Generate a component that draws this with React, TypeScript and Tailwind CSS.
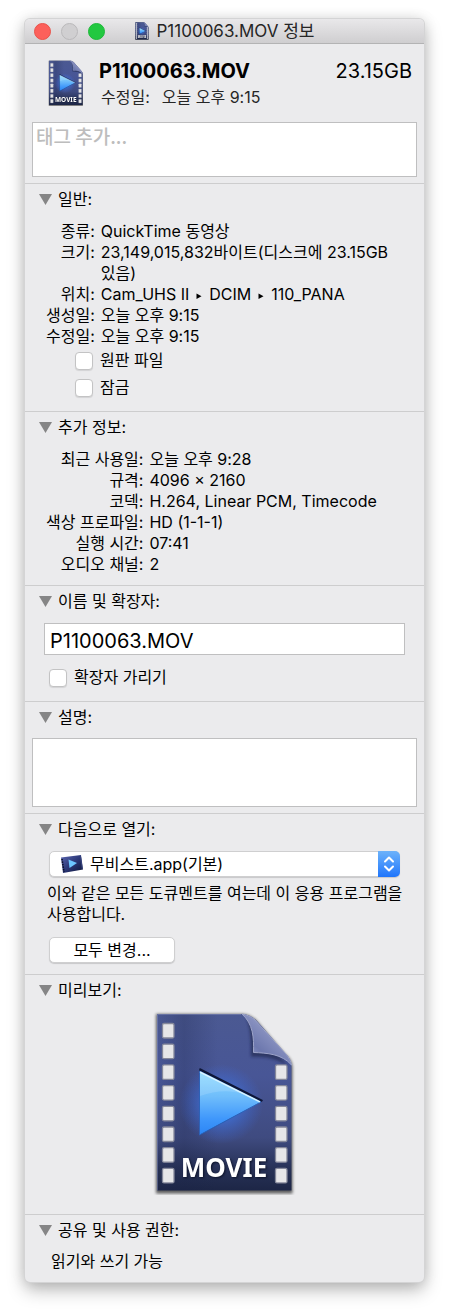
import React, { useId, useState } from 'react';

interface InfoRow {
  label: string;
  value: React.ReactNode;
}

interface SectionProps {
  title: string;
  children: React.ReactNode;
}

interface CheckRowProps {
  label: string;
  className?: string;
}

const PathArrow = () => (
  <svg className="mx-1.5 inline-block h-2 w-2" viewBox="0 0 8 8" aria-hidden="true">
    <path d="M1.500 1.500L6.500 4.200L1.500 7Z" fill="#000" />
  </svg>
);

const generalRows: InfoRow[] = [
  { label: '종류:', value: 'QuickTime 동영상' },
  { label: '크기:', value: '23,149,015,832바이트(디스크에 23.15GB 있음)' },
  {
    label: '위치:',
    value: (
      <>
        Cam_UHS II
        <PathArrow />
        DCIM
        <PathArrow />
        110_PANA
      </>
    ),
  },
  { label: '생성일:', value: '오늘 오후 9:15' },
  { label: '수정일:', value: '오늘 오후 9:15' },
];

const moreRows: InfoRow[] = [
  { label: '최근 사용일:', value: '오늘 오후 9:28' },
  { label: '규격:', value: '4096 × 2160' },
  { label: '코덱:', value: 'H.264, Linear PCM, Timecode' },
  { label: '색상 프로파일:', value: 'HD (1-1-1)' },
  { label: '실행 시간:', value: '07:41' },
  { label: '오디오 채널:', value: '2' },
];

const leftHoles = [0, 1, 2, 3, 4, 5, 6, 7];
const rightHoles = [2, 3, 4, 5, 6, 7];

/**
 * Film strip document icon, used at three sizes.
 */
const MovieIcon: React.FC<{ className: string }> = ({ className }) => {
  const id = useId();

  return (
    <svg className={className} viewBox="0 0 144 184" aria-hidden="true">
      <defs>
        <linearGradient id={`${id}body`} x1="0" y1="0" x2="0" y2="1">
          <stop offset="0" stopColor="#4b5992" />
          <stop offset="0.35" stopColor="#485696" />
          <stop offset="0.7" stopColor="#3f4b80" />
          <stop offset="0.88" stopColor="#273156" />
          <stop offset="1" stopColor="#1d2646" />
        </linearGradient>
        <linearGradient id={`${id}side`} x1="0" y1="0" x2="1" y2="0">
          <stop offset="0" stopColor="#1a2347" stopOpacity="0" />
          <stop offset="0.2" stopColor="#1a2347" stopOpacity="0.25" />
          <stop offset="0.45" stopColor="#1a2347" stopOpacity="0" />
        </linearGradient>
        <radialGradient id={`${id}glow`}>
          <stop offset="0.3" stopColor="#3d7cf0" stopOpacity="0.7" />
          <stop offset="1" stopColor="#3d6ae0" stopOpacity="0" />
        </radialGradient>
        <linearGradient id={`${id}play`} x1="0" y1="0" x2="0" y2="1">
          <stop offset="0" stopColor="#8fdcff" />
          <stop offset="0.4" stopColor="#6fbdfb" />
          <stop offset="0.75" stopColor="#3f97fb" />
          <stop offset="1" stopColor="#2b85f5" />
        </linearGradient>
        <linearGradient id={`${id}fold`} x1="0" y1="1" x2="0.6" y2="0.3">
          <stop offset="0" stopColor="#a9b0d6" />
          <stop offset="0.5" stopColor="#6d78ae" />
          <stop offset="1" stopColor="#8f97c4" />
        </linearGradient>
        <filter id={`${id}soft`} x="-20%" y="-20%" width="140%" height="140%">
          <feGaussianBlur stdDeviation="1.4" />
        </filter>
      </defs>
      <path d="M3 3H88C94 3 98 5 103 9L132 43C138 48 139.500 52 139.500 57V182.500H3Z" fill="#000" opacity="0.6" filter={`url(#${id}soft)`} />
      <path d="M4 3H88C94 3 99 5 104 10L132 42C137 47 138.500 51 138.500 56V179.500H4Z" fill={`url(#${id}body)`} />
      <path d="M4 3H88C94 3 99 5 104 10L132 42C137 47 138.500 51 138.500 56V179.500H4Z" fill={`url(#${id}side)`} />
      <path d="M4.500 179.500V3.500H88" fill="none" stroke="#8790ba" strokeOpacity="0.5" />
      <path d="M93 6C98 16 98 32 98 46C112 45 124 48 135 55Z" fill="#131b3c" opacity="0.55" filter={`url(#${id}soft)`} />
      <path d="M89 3C94 4 97 5 101 8L133 43C136 47 138 50 138.500 54C129 43 114 42 100.500 41.500C101 26 100 13 89 3Z" fill={`url(#${id}fold)`} stroke="#9da4c9" strokeWidth="1" />
      {leftHoles.map((n) => (
        <rect key={n} x="9.500" y={12.5 + n * 20.7} width="11.500" height="14.500" rx="1.500" fill="#e6e6e8" stroke="#85889a" strokeWidth="1.300" />
      ))}
      {rightHoles.map((n) => (
        <rect key={n} x="122.500" y={12.5 + n * 20.7} width="11.500" height="14.500" rx="1.500" fill="#e6e6e8" stroke="#85889a" strokeWidth="1.300" />
      ))}
      <ellipse cx="68" cy="93" rx="42" ry="40" fill={`url(#${id}glow)`} />
      <path d="M47 58L109 89.500L47 123Z" fill="#0e1738" stroke="#0e1738" strokeWidth="1.500" strokeLinejoin="round" />
      <path d="M46.500 60L108 91L46.500 124Z" fill={`url(#${id}play)`} stroke="#2d62b8" strokeWidth="1" strokeLinejoin="round" />
      <path d="M47 61L107 90.800" stroke="#d6f3ff" strokeWidth="1.500" />
      <path d="M47 61L92 83.500C76 78 62 80 47 85Z" fill="#fff" opacity="0.14" />
      <text
        x="71"
        y="166"
        textAnchor="middle"
        className="font-['Noto_Sans',sans-serif] text-[26px] font-bold drop-shadow-[1px_1px_1px_#0c1228]"
        fill="#fff"
      >
        MOVIE
      </text>
    </svg>
  );
};

const AppIcon = () => (
  <svg className="h-[18px] w-[22px]" viewBox="0 0 22 18" aria-hidden="true">
    <defs>
      <linearGradient id="player" x1="0" y1="0" x2="1" y2="1">
        <stop offset="0" stopColor="#5a66b0" />
        <stop offset="0.5" stopColor="#2c3878" />
        <stop offset="1" stopColor="#0d1436" />
      </linearGradient>
    </defs>
    <path d="M0 2.500L20 0L22 14.500L2 18Z" fill="url(#player)" />
    <path d="M1 4L3 17" stroke="#070b20" strokeWidth="1.500" strokeDasharray="1.500 1" />
    <path d="M19.500 1.500L21.300 14" stroke="#39447e" strokeWidth="1" />
    <path d="M7.500 4.500L16 8L8.500 13Z" fill="#6dc6ff" />
  </svg>
);

const Section: React.FC<SectionProps> = ({ title, children }) => {
  const [open, setOpen] = useState(true);

  return (
    <section className="border-t border-[#cdcdce]">
      <h2>
        <button
          type="button"
          aria-expanded={open}
          onClick={() => setOpen(!open)}
          className="flex h-[31px] w-full items-center gap-1.5 pl-3.5 text-left"
        >
          <svg className={`h-[11px] w-[13px] ${open ? '' : '-rotate-90'}`} viewBox="0 0 13 11" aria-hidden="true">
            <path d="M0 0H13L6.500 11Z" fill="#858586" />
          </svg>
          {title}
        </button>
      </h2>
      {open && children}
    </section>
  );
};

const InfoList: React.FC<{ rows: InfoRow[] }> = ({ rows }) => (
  <dl className="grid grid-cols-[auto_1fr] gap-x-1.5 pl-[21px] pr-4">
    {rows.map((row) => (
      <React.Fragment key={row.label}>
        <dt className="text-right">{row.label}</dt>
        <dd className="break-keep">{row.value}</dd>
      </React.Fragment>
    ))}
  </dl>
);

const CheckRow: React.FC<CheckRowProps> = ({ label, className = '' }) => (
  <label className={`flex h-[27px] items-center gap-[7px] ${className}`}>
    <input
      type="checkbox"
      className="size-[18px] appearance-none rounded-[4px] border border-[#c3c3c4] bg-white shadow-[0_1px_1px_#0000001a] checked:bg-[#3b8bf8]"
    />
    {label}
  </label>
);

export default function App() {
  const [fileName, setFileName] = useState('P1100063.MOV');

  return (
    <div className="bg-white px-[25px] pb-8 pt-[19px] font-[Inter,'Noto_Sans_CJK_KR',sans-serif] text-[16px] leading-[21px] text-black">
      <main className="overflow-hidden rounded-[5px] bg-[#ebebed] shadow-[0_0_0_1px_#d4d4d5,0_8px_18px_#00000045,0_0_14px_#00000020]">
        {/* Title bar */}
        <header className="relative flex h-[25px] items-center justify-center gap-2 border-b border-[#b3b3b4] bg-linear-to-b from-[#e9e8ea] to-[#cfced0]">
          <div className="absolute left-[9px] flex gap-2.5">
            <button type="button" aria-label="닫기" className="size-[17px] rounded-full border border-[#e9524a] bg-[#fc605b]" />
            <button type="button" aria-label="최소화" disabled className="size-[17px] rounded-full border border-[#b9b8ba] bg-[#d0cfd1]" />
            <button type="button" aria-label="확대" className="size-[17px] rounded-full border border-[#1fb83a] bg-[#22c840]" />
          </div>
          <MovieIcon className="h-[18px] w-3.5" />
          <h1 className="text-[17px] text-[#262626]">P1100063.MOV 정보</h1>
        </header>

        {/* File summary */}
        <div className="flex h-[78px] items-center gap-[15px] pl-[23px] pr-3">
          <MovieIcon className="h-[46px] w-9" />
          <div className="flex-1 pt-0.5">
            <div className="flex items-center justify-between text-[20px] leading-[26px]">
              <strong className="font-bold">P1100063.MOV</strong>
              <span>23.15GB</span>
            </div>
            <p className="flex gap-3 pl-0.5 leading-[26px] text-[#262626]">
              <span>수정일:</span>
              <span>오늘 오후 9:15</span>
            </p>
          </div>
        </div>
        <div className="px-[7px] pb-1.5">
          <textarea
            aria-label="태그"
            placeholder="태그 추가..."
            className="block h-[55px] w-full resize-none border border-[#bfbfc0] bg-white px-[3px] font-['Noto_Sans_CJK_KR',sans-serif] text-[19px] leading-[26px] outline-none placeholder:font-medium placeholder:text-[#bdbdbd]"
          />
        </div>

        <Section title="일반:">
          <div className="pb-2.5 pt-1.5">
            <InfoList rows={generalRows} />
            <CheckRow label="원판 파일" className="pl-[50px]" />
            <CheckRow label="잠금" className="pl-[50px]" />
          </div>
        </Section>

        <Section title="추가 정보:">
          <div className="pb-2.5 pt-1.5">
            <InfoList rows={moreRows} />
          </div>
        </Section>

        <Section title="이름 및 확장자:">
          <div className="pb-2.5 pt-1.5">
            <div className="px-[19px] pb-[9px]">
              <input
                type="text"
                aria-label="이름 및 확장자"
                value={fileName}
                onChange={(e) => setFileName(e.target.value)}
                className="block h-8 w-full border border-[#bfbfc0] bg-white px-[5px] pt-1 text-[20px] outline-none"
              />
            </div>
            <CheckRow label="확장자 가리기" className="pl-6" />
          </div>
        </Section>

        <Section title="설명:">
          <div className="px-[7px] pb-1.5 pt-[5px]">
            <textarea
              aria-label="설명"
              className="block h-[69px] w-full resize-none border border-[#bfbfc0] bg-white px-1 outline-none"
            />
          </div>
        </Section>

        <Section title="다음으로 열기:">
          <div className="px-6 pb-[11px] pt-1.5">
            <div className="relative flex items-center">
              <select
                aria-label="다음으로 열기"
                className="h-[26px] w-full appearance-none rounded-[5px] border border-[#cfcfd0] bg-white pl-10 shadow-[0_1px_1px_#00000026] outline-none"
              >
                <option>무비스트.app(기본)</option>
              </select>
              <span className="pointer-events-none absolute left-3">
                <AppIcon />
              </span>
              <span className="pointer-events-none absolute right-0 flex h-[26px] w-[22px] items-center justify-center rounded-r-[5px] bg-linear-to-b from-[#6cb2fa] to-[#1f75fb]">
                <svg className="h-4 w-3" viewBox="0 0 12 16" fill="none" stroke="#fff" strokeWidth="2" strokeLinecap="round" strokeLinejoin="round" aria-hidden="true">
                  <path d="M2 5.500L6 1.500L10 5.500M2 10.500L6 14.500L10 10.500" />
                </svg>
              </span>
            </div>
            <p className="-ml-0.5 -mr-3 break-keep pt-1.5">
              이와 같은 모든 도큐멘트를 여는데 이 응용 프로그램을 사용합니다.
            </p>
            <button
              type="button"
              className="mt-3 block h-[26px] w-[126px] rounded-[5px] border border-[#cfcfd0] bg-white shadow-[0_1px_1px_#00000026]"
            >
              모두 변경...
            </button>
          </div>
        </Section>

        <Section title="미리보기:">
          <div className="flex justify-center pb-[19px] pt-[5px]">
            <MovieIcon className="h-[184px] w-36" />
          </div>
        </Section>

        <Section title="공유 및 사용 권한:">
          <p className="px-[26px] pb-2.5 pt-[5px]">읽기와 쓰기 가능</p>
        </Section>
      </main>
    </div>
  );
}
